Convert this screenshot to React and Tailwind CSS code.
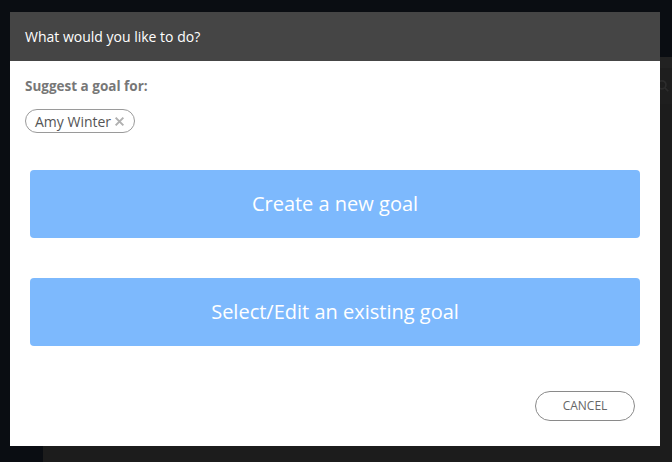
import React from 'react';

const font = { fontFamily: '"Open Sans", Lato, sans-serif' };

const App = () => {
  return (
    <div className="relative w-[672px] h-[462px] overflow-hidden bg-[#0a0d12]" style={font}>
      {/* page behind the dialog */}
      <div className="flex flex-col h-full">
        <div className="h-[57px] bg-[#0a0d12]" />
        <div className="flex flex-1">
          <div className="w-[43px] bg-[#0a0d12] flex flex-col items-end gap-[40px] pt-[78px] overflow-hidden">
            <div className="w-[20px] h-[20px] rounded-full border-2 border-[#1c1f24] -mr-[2px]" />
            <div className="w-[20px] h-[20px] rounded-full border-2 border-[#1c1f24] -mr-[2px]" />
            <div className="w-[20px] h-[20px] rounded-full border-2 border-[#1c1f24] -mr-[2px]" />
          </div>
          <div className="flex-1 bg-[#1c1c1c] flex flex-col">
            <div className="h-[11px] bg-[#222222]" />
            <div className="h-[36px] bg-[#1e1e1e] flex justify-end items-center pr-[2px]">
              <svg width="14" height="14" viewBox="0 0 24 24" fill="none" stroke="#2c2c2c" strokeWidth="3">
                <circle cx="10" cy="10" r="7" />
                <path d="M15 15l6 6" />
              </svg>
            </div>
          </div>
        </div>
      </div>

      {/* dialog */}
      <div className="absolute left-[10px] top-[12px] w-[650px] h-[434px] bg-white flex flex-col">
        <div className="h-[49px] bg-[#454545] flex items-center px-[15px]">
          <span className="text-white text-[14px]">What would you like to do?</span>
        </div>
        <div className="flex flex-col px-[15px] pt-[16px]">
          <p className="text-[13.5px] font-bold text-[#777777] leading-[18px]">Suggest a goal for:</p>
          <div className="mt-[14px] flex">
            <span className="inline-flex items-center h-[24px] px-[9px] rounded-full border border-[#9a9a9a] text-[14px] text-[#555555]">
              Amy Winter
              <svg className="ml-[3px]" width="11" height="11" viewBox="0 0 10 10" stroke="#b0b0b0" strokeWidth="1.8">
                <path d="M1.5 1.5l7 7M8.5 1.5l-7 7" />
              </svg>
            </span>
          </div>
          <div className="px-[5px] mt-[37px] flex flex-col gap-[40px]">
            <button className="h-[68px] rounded-[4px] bg-[#7db9fd] text-white text-[20px]">Create a new goal</button>
            <button className="h-[68px] rounded-[4px] bg-[#7db9fd] text-white text-[20px]">Select/Edit an existing goal</button>
          </div>
          <div className="flex justify-end mt-[45px] pr-[10px]">
            <button className="w-[100px] h-[30px] rounded-full border border-[#8a8a8a] text-[12px] text-[#666666]">CANCEL</button>
          </div>
        </div>
      </div>
    </div>
  );
};

export default App;
